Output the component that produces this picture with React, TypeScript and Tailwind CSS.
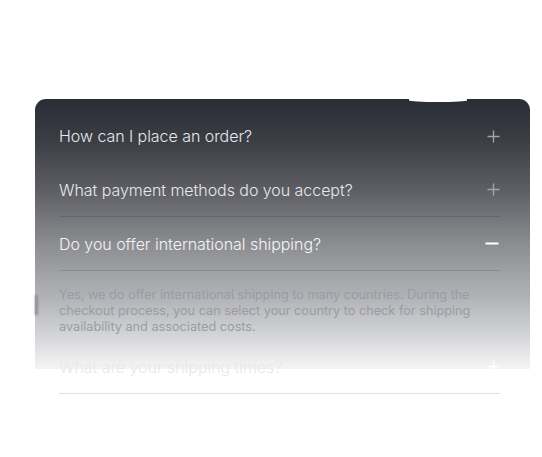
import { useState } from 'react'

interface FaqItem {
    question: string
    answer: string
}

const items: FaqItem[] = [
    {
        question: 'How can I place an order?',
        answer: 'Browse our catalog, add the products you like to your cart and follow the checkout steps to complete your purchase.',
    },
    {
        question: 'What payment methods do you accept?',
        answer: 'We accept all major credit cards, PayPal and bank transfers.',
    },
    {
        question: 'Do you offer international shipping?',
        answer: 'Yes, we do offer international shipping to many countries. During the checkout process, you can select your country to check for shipping availability and associated costs.',
    },
    {
        question: 'What are your shipping times?',
        answer: 'Most orders ship within 2-3 business days.',
    },
]

function PlusIcon({ className }: { className?: string }) {
    return (
        <svg width="13" height="13" viewBox="0 0 13 13" className={className}>
            <path d="M6.5 0.5v12M0.5 6.5h12" stroke="currentColor" strokeWidth="1.4" fill="none" />
        </svg>
    )
}

function MinusIcon({ className }: { className?: string }) {
    return (
        <svg width="14" height="13" viewBox="0 0 14 13" className={className}>
            <path d="M0.5 6.5h13" stroke="currentColor" strokeWidth="2" fill="none" />
        </svg>
    )
}

function App() {
    const [open, setOpen] = useState<number | null>(2)

    return (
        <div className="min-h-[457px] w-full bg-white pt-[99px] pl-[35px] pr-[12px]" style={{ fontFamily: 'Inter, "Noto Sans", sans-serif' }}>
            <div className="relative rounded-t-[11px] bg-no-repeat bg-[length:100%_270px] bg-[linear-gradient(to_bottom,#2a2d35_0px,#3b3d44_40px,#5d5e63_90px,#8c8d91_145px,#b3b4b7_200px,#d2d3d5_235px,#eeeeef_262px,#f4f4f4_270px)] pl-6 pr-[30px] pt-2.5">
                {/* soft notch along the top edge */}
                <div className="absolute left-[374px] top-0 h-[3px] w-[58px] rounded-b-[50%] bg-white" />
                <div className="absolute left-0 top-[196px] h-[20px] w-[3px] bg-[#8d8e92] blur-[1px]" />
                {items.map((item, index) => {
                    const isOpen = open === index
                    return (
                        <div key={index}>
                            <button
                                type="button"
                                onClick={() => setOpen(isOpen ? null : index)}
                                className={'flex h-[54px] w-full items-center justify-between text-left ' + (index === 0 ? '' : 'border-b border-black/[0.12]')}
                            >
                                <span className={'text-[16px] font-light tracking-[-0.05px] ' + (isOpen ? 'text-[#f4f4f5]' : 'text-[#e8e8ea]')}>
                                    {item.question}
                                </span>
                                {isOpen ? (
                                    <MinusIcon className="mr-[1px] text-white" />
                                ) : (
                                    <PlusIcon className={index === 3 ? 'text-white' : 'text-[#a3a4a9]'} />
                                )}
                            </button>
                            {isOpen && (
                                <p className="pt-[16px] pb-[5px] text-[12.7px] leading-[16px] text-[#9a9ba6]">
                                    {item.answer}
                                </p>
                            )}
                        </div>
                    )
                })}
            </div>
        </div>
    )
}

export default App
